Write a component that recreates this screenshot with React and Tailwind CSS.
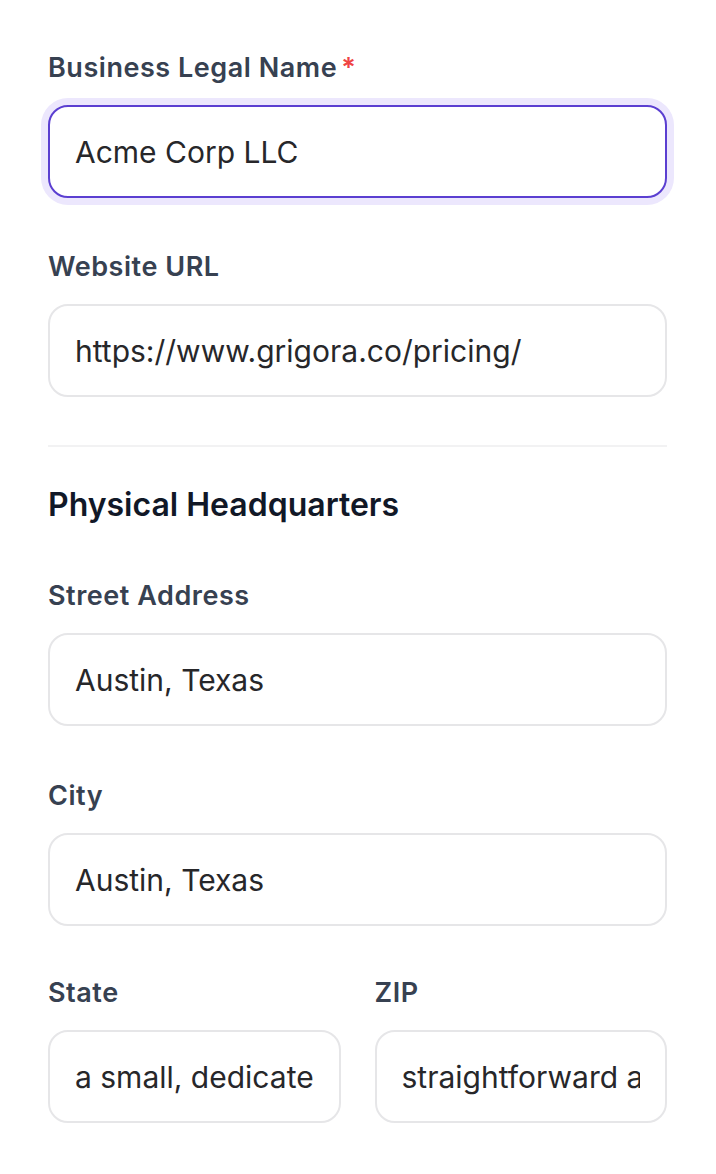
import React from 'react';

const font = { fontFamily: 'Inter, "Noto Sans", sans-serif' };

const Field = ({ label, value, required, focused }) => (
    <div className="flex flex-col gap-[19px] min-w-0">
        <label className="text-[27px] leading-[36px] font-semibold tracking-[0.02em] text-[#374151]">
            {label}
            {required && <span className="ml-[4px] text-[#ef4444]">*</span>}
        </label>
        <input
            readOnly
            value={value}
            className={`h-[93px] w-full min-w-0 rounded-[20px] bg-white px-[25px] text-[30px] text-[#27272a] outline-none ${
                focused
                    ? 'border-2 border-[#5b3fd1] ring-[7px] ring-[#ece7fd]'
                    : 'border-2 border-[#e6e6e8]'
            }`}
            style={font}
        />
    </div>
);

export default function App() {
    return (
        <div className="min-h-[1174px] w-full bg-white" style={font}>
            <div className="flex flex-col px-[48px] pr-[49px] pt-[50px]">
                <Field label="Business Legal Name" value="Acme Corp LLC" required focused />
                <div className="mt-[51px]">
                    <Field label="Website URL" value="https://www.grigora.co/pricing/" />
                </div>

                {/* divider */}
                <div className="mt-[48px] h-[2px] bg-[#f2f2f3]" />

                <h2 className="mt-[38px] text-[32px] leading-[40px] font-semibold text-[#111827]">
                    Physical Headquarters
                </h2>

                <div className="mt-[53px]">
                    <Field label="Street Address" value="Austin, Texas" />
                </div>
                <div className="mt-[52px]">
                    <Field label="City" value="Austin, Texas" />
                </div>
                <div className="mt-[49px] grid grid-cols-2 gap-[34px]">
                    <Field label="State" value="a small, dedicated team" />
                    <Field label="ZIP" value="straightforward and simple" />
                </div>
            </div>
        </div>
    );
}
